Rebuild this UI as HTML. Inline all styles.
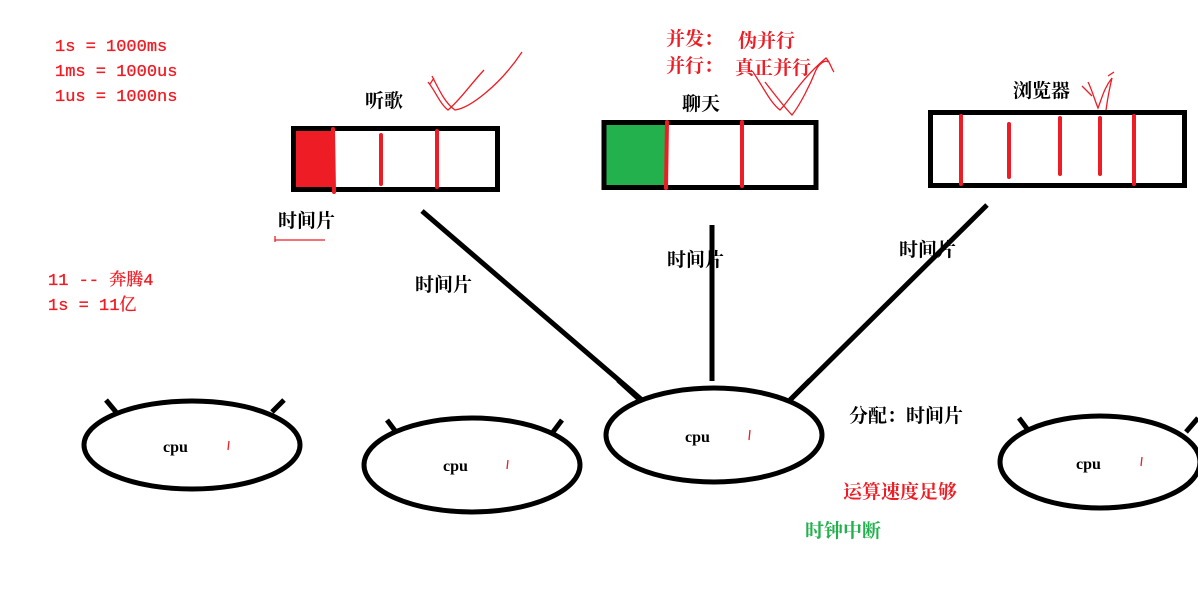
<!DOCTYPE html>
<html><head><meta charset="utf-8"><style>
html,body{margin:0;padding:0;background:#fff;width:1198px;height:609px;overflow:hidden}
svg{display:block}
.cn{font-family:"Liberation Serif","Noto Serif CJK SC",serif;font-weight:bold}
.mono{font-family:"Liberation Mono","Noto Serif CJK SC",monospace}
</style></head><body>
<svg width="1198" height="609" viewBox="0 0 1198 609" xmlns="http://www.w3.org/2000/svg">
<g class="mono" fill="#ee1c24" font-size="17" stroke="#ee1c24" stroke-width="0.3">
<text x="55" y="51">1s = 1000ms</text>
<text x="55" y="76">1ms = 1000us</text>
<text x="55" y="101">1us =  1000ns</text>
<text x="48" y="285">11 -- 奔腾4</text>
<text x="48" y="310">1s = 11亿</text>
</g>
<g class="cn" font-size="19">
<text x="666" y="45" fill="#ee1c24">并发：</text><text x="738" y="47" fill="#ee1c24">伪并行</text>
<text x="666" y="72" fill="#ee1c24">并行：</text><text x="735" y="74" fill="#ee1c24">真正并行</text>
<text x="365" y="107" fill="#000">听歌</text>
<text x="682" y="110" fill="#000">聊天</text>
<text x="1013" y="97" fill="#000">浏览器</text>
<text x="278" y="227" fill="#000">时间片</text>
<text x="415" y="291" fill="#000">时间片</text>
<text x="667" y="266" fill="#000">时间片</text>
<text x="899" y="256" fill="#000">时间片</text>
<text x="849" y="422" fill="#000">分配：时间片</text>
<text x="843" y="498" fill="#ee1c24">运算速度足够</text>
<text x="805" y="537" fill="#22b14c">时钟中断</text>
</g>
<!-- boxes -->
<rect x="295" y="130" width="38" height="58" fill="#ee1c24"/>
<rect x="293.5" y="128.5" width="204" height="61" fill="none" stroke="#000" stroke-width="5"/>
<g stroke="#ee1c24" stroke-width="4" stroke-linecap="round">
<line x1="333" y1="129" x2="334" y2="192"/><line x1="381" y1="135" x2="381" y2="184"/><line x1="437" y1="131" x2="437" y2="187"/>
</g>
<rect x="605" y="123" width="61" height="64" fill="#22b14c"/>
<rect x="604" y="122.5" width="212" height="65" fill="none" stroke="#000" stroke-width="5"/>
<g stroke="#ee1c24" stroke-width="4" stroke-linecap="round">
<line x1="667" y1="122" x2="666" y2="188"/><line x1="742" y1="122" x2="742" y2="186"/>
</g>
<rect x="930.5" y="112.5" width="254" height="73" fill="none" stroke="#000" stroke-width="5"/>
<g stroke="#ee1c24" stroke-width="4" stroke-linecap="round">
<line x1="961" y1="116" x2="961" y2="184"/><line x1="1009" y1="124" x2="1009" y2="177"/><line x1="1060" y1="118" x2="1060" y2="174"/><line x1="1100" y1="118" x2="1100" y2="174"/><line x1="1134" y1="116" x2="1134" y2="184"/>
</g>
<!-- lines -->
<g stroke="#000" stroke-width="5">
<line x1="422" y1="211" x2="642" y2="400"/>
<line x1="712" y1="225" x2="712" y2="381"/>
<line x1="987" y1="205" x2="790" y2="400"/>
</g>
<!-- ellipses -->
<g fill="none" stroke="#000" stroke-width="5">
<ellipse cx="192" cy="445" rx="108" ry="44"/>
<ellipse cx="472" cy="465" rx="108" ry="47"/>
<ellipse cx="714" cy="435" rx="108" ry="47"/>
<ellipse cx="1100" cy="462" rx="100" ry="46"/>
<line x1="106" y1="400" x2="116" y2="412"/><line x1="284" y1="400" x2="272" y2="412"/>
<line x1="387" y1="420" x2="396" y2="432"/><line x1="562" y1="420" x2="553" y2="432"/>
<line x1="618" y1="380" x2="640" y2="400"/><line x1="810" y1="380" x2="790" y2="400"/>
<line x1="1019" y1="418" x2="1028" y2="430"/><line x1="1198" y1="418" x2="1186" y2="432"/>
</g>
<g font-family="Liberation Serif,serif" font-weight="bold" font-size="16" fill="#000">
<text x="163" y="452">cpu</text><text x="443" y="471">cpu</text><text x="685" y="442">cpu</text><text x="1076" y="469">cpu</text>
</g>
<g stroke="#ee1c24" stroke-width="1.3" fill="none">
<line x1="229" y1="441" x2="228" y2="450"/><line x1="508" y1="460" x2="507" y2="469"/><line x1="750" y1="430" x2="749" y2="440"/><line x1="1142" y1="457" x2="1141" y2="466"/>
<line x1="275" y1="240" x2="325" y2="240"/><line x1="275" y1="236" x2="275" y2="242"/>
<path d="M428,82 C436,92 440,104 448,110 C460,100 470,85 484,70 M432,76 C440,92 446,104 455,110 C470,108 500,85 522,52 M430,84 L434,78"/>
<path d="M753,72 C765,90 770,102 780,110 C790,100 800,80 826,58 C830,62 832,70 834,72 M765,82 C775,95 785,108 792,115 C800,105 810,85 816,70 C820,62 826,60 828,62"/>
<path d="M1088,82 C1092,90 1094,98 1098,108 C1102,98 1104,88 1112,78 C1110,86 1108,96 1106,110 M1082,86 L1092,96 M1114,72 L1108,76"/>
</g>
</svg>
</body></html>
